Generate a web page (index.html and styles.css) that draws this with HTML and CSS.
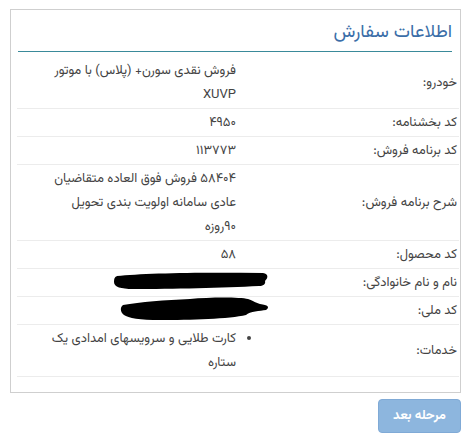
FILE: index.html
```html
<!DOCTYPE html>
<html lang="fa" dir="rtl">
<head>
    <meta charset="UTF-8">
    <meta name="viewport" content="width=device-width, initial-scale=1.0">
    <title>اطلاعات سفارش</title>
    <link rel="stylesheet" href="styles.css">
</head>
<body>

    <div class="page">
        <!-- Order info card -->
        <div class="order-card">
            <div class="card-title">اطلاعات سفارش</div>

            <div class="order-list">
                <div class="order-row">
                    <div class="label">خودرو:</div>
                    <div class="value">فروش نقدی سورن+ (پلاس) با موتور XUVP</div>
                </div>
                <div class="order-row">
                    <div class="label">کد بخشنامه:</div>
                    <div class="value">۴۹۵۰</div>
                </div>
                <div class="order-row">
                    <div class="label">کد برنامه فروش:</div>
                    <div class="value">۱۱۳۷۷۳</div>
                </div>
                <div class="order-row">
                    <div class="label">شرح برنامه فروش:</div>
                    <div class="value">۵۸۴۰۴ فروش فوق العاده متقاضیان عادی سامانه اولویت بندی تحویل ۹۰روزه</div>
                </div>
                <div class="order-row">
                    <div class="label">کد محصول:</div>
                    <div class="value">۵۸</div>
                </div>
                <div class="order-row">
                    <div class="label">نام و نام خانوادگی:</div>
                    <div class="value redacted">
                        <svg class="scribble scribble-name" viewBox="0 0 156 18" preserveAspectRatio="none">
                            <path d="M4 4 C30 1 90 0 150 1 C156 2 155 6 152 9 C153 12 150 14 146 14 C110 16 60 17 20 17 C8 17 1 15 1 10 C1 6 2 5 4 4 Z"/>
                        </svg>
                    </div>
                </div>
                <div class="order-row">
                    <div class="label">کد ملی:</div>
                    <div class="value redacted">
                        <svg class="scribble scribble-id" viewBox="0 0 150 24" preserveAspectRatio="none">
                            <path d="M3 8 C20 5 45 3 70 2 C90 0 120 0 128 2 C134 4 136 6 140 7 C148 8 150 10 146 13 C140 14 130 14 126 18 C110 22 70 23 40 23 C20 23 8 21 4 18 C0 15 0 10 3 8 Z"/>
                        </svg>
                    </div>
                </div>
                <div class="order-row">
                    <div class="label">خدمات:</div>
                    <div class="value">
                        <ul class="services">
                            <li>کارت طلایی و سرویسهای امدادی یک ستاره</li>
                        </ul>
                    </div>
                </div>
            </div>
        </div>

        <div class="actions">
            <button class="next-btn" disabled>مرحله بعد</button>
        </div>
    </div>

</body>
</html>
```

FILE: styles.css
```css
body {
    margin: 0;
    font-family: 'Vazirmatn', 'DejaVu Sans', sans-serif;
    font-size: 13px;
    color: #444;
    background-color: #fff;
}

.page {
    width: 451px;
    padding: 9px 0 0 0;
    margin: 0 auto 0 10px;
}

/* Card */
.order-card {
    border: 1px solid #cfcfcf;
    padding: 0 1px 15px 6px;
}

.card-title {
    margin: 0 7px 5px 1px;
    padding: 11px 0 6px 0;
    font-size: 18.5px;
    line-height: 24px;
    color: #3b6ea8;
    border-bottom: 1px solid #3a8a9a;
}

/* Rows */
.order-row {
    display: grid;
    grid-template-columns: 222px 220px;
    border-bottom: 1px solid #ececec;
}

.label,
.value {
    padding: 2px 0 1px 0;
    line-height: 24px;
    display: flex;
    flex-direction: column;
    justify-content: center;
}

.label {
    padding-right: 2px;
}

.value {
    padding-right: 1px;
    padding-left: 30px;
}

.redacted {
    position: relative;
    min-height: 24px;
}

.scribble {
    position: absolute;
    fill: #000;
}

.scribble-name {
    left: 96px;
    top: 3px;
    width: 156px;
    height: 18px;
}

.scribble-id {
    left: 103px;
    top: 0;
    width: 150px;
    height: 24px;
}

.services {
    margin: 0;
    padding: 0;
    list-style: disc outside;
}

/* Button */
.actions {
    display: flex;
    justify-content: flex-start;
    padding-top: 6px;
}

.next-btn {
    width: 83px;
    height: 34px;
    font-family: inherit;
    font-size: 13px;
    font-weight: bold;
    color: #fff;
    background-color: #8db6de;
    border: 1px solid #80aad6;
    border-radius: 4px;
}
```
